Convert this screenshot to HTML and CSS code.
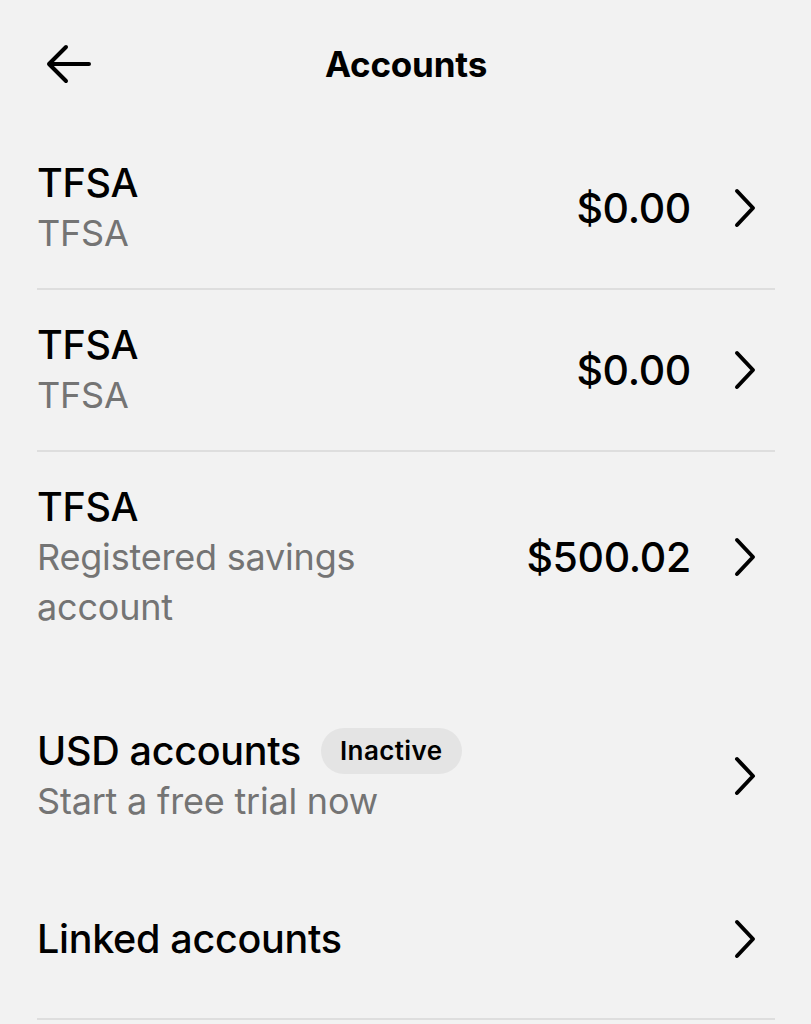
FILE: index.html
```html
<!DOCTYPE html>
<html lang="en">
<head>
<meta charset="utf-8">
<title>Accounts</title>
<link rel="stylesheet" href="styles.css">
</head>
<body>
<div class="screen">
  <header class="topbar">
    <button class="back" aria-label="Back">
      <svg width="48" height="40" viewBox="0 0 48 40" fill="none" stroke="#000" stroke-width="4" stroke-linecap="round" stroke-linejoin="round"><path d="M44 20 H4 M21 3 L4 20 L21 37"/></svg>
    </button>
    <h1 class="title">Accounts</h1>
    <span class="spacer"></span>
  </header>

  <section class="list list-divided">
    <div class="row">
      <div class="text">
        <div class="name">TFSA</div>
        <div class="sub">TFSA</div>
      </div>
      <div class="amount">$0.00</div>
      <svg class="chev" width="24" height="40" viewBox="0 0 24 40" fill="none" stroke="#000" stroke-width="4" stroke-linecap="round" stroke-linejoin="round"><path d="M4 3 L20 20 L4 37"/></svg>
    </div>
    <div class="row">
      <div class="text">
        <div class="name">TFSA</div>
        <div class="sub">TFSA</div>
      </div>
      <div class="amount">$0.00</div>
      <svg class="chev" width="24" height="40" viewBox="0 0 24 40" fill="none" stroke="#000" stroke-width="4" stroke-linecap="round" stroke-linejoin="round"><path d="M4 3 L20 20 L4 37"/></svg>
    </div>
    <div class="row">
      <div class="text narrow">
        <div class="name">TFSA</div>
        <div class="sub">Registered savings account</div>
      </div>
      <div class="amount">$500.02</div>
      <svg class="chev" width="24" height="40" viewBox="0 0 24 40" fill="none" stroke="#000" stroke-width="4" stroke-linecap="round" stroke-linejoin="round"><path d="M4 3 L20 20 L4 37"/></svg>
    </div>
  </section>

  <section class="list list-links">
    <div class="row">
      <div class="text">
        <div class="name name-badge">USD accounts <span class="badge">Inactive</span></div>
        <div class="sub">Start a free trial now</div>
      </div>
      <svg class="chev" width="24" height="40" viewBox="0 0 24 40" fill="none" stroke="#000" stroke-width="4" stroke-linecap="round" stroke-linejoin="round"><path d="M4 3 L20 20 L4 37"/></svg>
    </div>
    <div class="row row-last">
      <div class="text">
        <div class="name">Linked accounts</div>
      </div>
      <svg class="chev" width="24" height="40" viewBox="0 0 24 40" fill="none" stroke="#000" stroke-width="4" stroke-linecap="round" stroke-linejoin="round"><path d="M4 3 L20 20 L4 37"/></svg>
    </div>
  </section>
</div>
</body>
</html>
```
FILE: styles.css
```css
* { box-sizing: border-box; }
html, body {
  margin: 0;
  padding: 0;
  background: #f2f2f2;
}
body {
  font-family: Inter, "Noto Sans", "Liberation Sans", sans-serif;
  color: #000;
}
.screen {
  width: 811px;
  min-height: 1024px;
  padding: 0 36px 0 37px;
}
.topbar {
  height: 128px;
  display: flex;
  align-items: center;
  justify-content: space-between;
}
.back {
  width: 60px;
  height: 48px;
  padding: 0 0 0 8px;
  margin-left: 0;
  border: 0;
  background: none;
  display: flex;
  align-items: center;
}
.spacer { width: 60px; }
.title {
  margin: 0;
  font-size: 35px;
  font-weight: 700;
  letter-spacing: -0.2px;
}
.list-divided .row {
  padding: 30px 0;
  border-bottom: 2px solid #dedede;
}
.list-divided .row:last-child { border-bottom: 0; }
.list-links { margin-top: 20px; border-bottom: 2px solid #dedede; }
.list-links .row { padding: 44px 0; }
.list-links .row-last { padding-bottom: 54px; }
.row {
  display: flex;
  align-items: center;
}
.text {
  flex: 1 1 auto;
  min-width: 0;
}
.text.narrow {
  flex: 0 1 340px;
  margin-right: auto;
}
.name {
  font-size: 39.5px;
  font-weight: 500;
  line-height: 50px;
  letter-spacing: -0.3px;
}
.name-badge {
  display: flex;
  align-items: center;
  gap: 20px;
}
.sub {
  font-size: 36px;
  font-weight: 400;
  line-height: 50px;
  color: #747474;
  letter-spacing: -0.2px;
}
.amount {
  font-size: 41px;
  font-weight: 500;
  letter-spacing: -0.3px;
  margin-left: auto;
  margin-right: 42px;
}
.chev {
  flex: none;
  margin-right: 18px;
}
.badge {
  display: inline-flex;
  align-items: center;
  height: 46px;
  padding: 0 19px;
  border-radius: 23px;
  background: #e4e4e4;
  font-size: 26px;
  font-weight: 600;
  letter-spacing: 0.4px;
}
```
